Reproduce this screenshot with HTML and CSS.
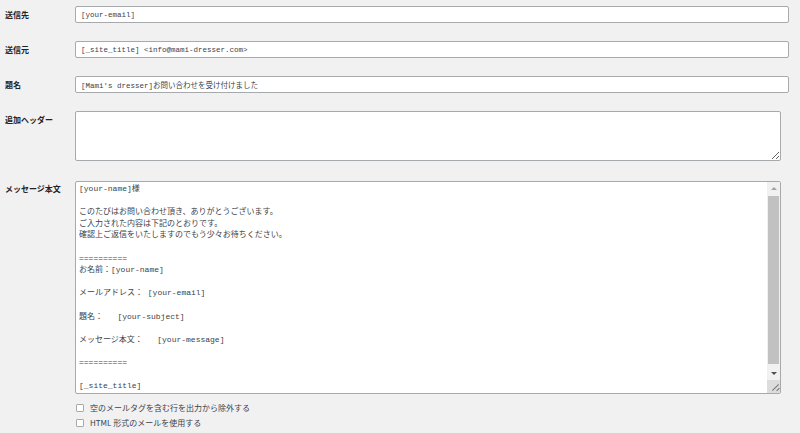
FILE: index.html
```html
<!DOCTYPE html>
<html lang="ja">
<head>
    <meta charset="UTF-8">
    <meta name="viewport" content="width=device-width, initial-scale=1.0">
    <title>メール設定</title>
    <link rel="stylesheet" href="styles.css">
</head>
<body>
    <div class="mail-form">
        <div class="row">
            <label class="row-label">送信先</label>
            <input class="field" type="text" value="[your-email]">
        </div>
        <div class="row">
            <label class="row-label">送信元</label>
            <input class="field" type="text" value="[_site_title] <info@mami-dresser.com>">
        </div>
        <div class="row">
            <label class="row-label">題名</label>
            <input class="field" type="text" value="[Mami's dresser]お問い合わせを受け付けました">
        </div>
        <div class="row row-top">
            <label class="row-label label-header">追加ヘッダー</label>
            <textarea class="area area-header"></textarea>
        </div>
        <div class="row row-top row-body">
            <label class="row-label label-body">メッセージ本文</label>
            <div class="body-cell">
                <div class="area-wrap">
                    <textarea class="area area-body">[your-name]様

このたびはお問い合わせ頂き、ありがとうございます。
ご入力された内容は下記のとおりです。
確認上ご返信をいたしますのでもう少々お待ちください。

==========
お名前：[your-name]

メールアドレス： [your-email]

題名：   [your-subject]

メッセージ本文：   [your-message]

==========

[_site_title]</textarea>
                    <!-- scrollbar drawn over the textarea edge -->
                    <div class="fake-scroll">
                        <div class="scroll-btn up"></div>
                        <div class="scroll-thumb"></div>
                        <div class="scroll-track"></div>
                        <div class="scroll-btn down"></div>
                        <div class="scroll-corner"></div>
                    </div>
                </div>
                <div class="options">
                    <label class="option"><input type="checkbox" class="check"> 空のメールタグを含む行を出力から除外する</label>
                    <label class="option"><input type="checkbox" class="check"> HTML 形式のメールを使用する</label>
                </div>
            </div>
        </div>
    </div>
</body>
</html>
```

FILE: styles.css
```css
* {
    margin: 0;
    padding: 0;
    box-sizing: border-box;
}

body {
    background-color: #f1f1f1;
    color: #1d2327;
    font-family: "Noto Sans CJK JP", "Noto Sans", sans-serif;
    font-size: 8px;
}

.mail-form {
    display: flex;
    flex-direction: column;
    gap: 18px;
    padding-top: 6px;
}

.row {
    display: flex;
    align-items: center;
}

.row-top {
    align-items: flex-start;
}

.row-body {
    margin-top: 2px;
}

.row-label {
    width: 75px;
    flex-shrink: 0;
    padding-left: 5px;
    font-weight: bold;
    line-height: 11px;
}

.label-header {
    padding-top: 3px;
}

.label-body {
    padding-top: 2px;
}

.field,
.area {
    background: #fff;
    border: 1px solid #a7aaad;
    border-radius: 2px;
    color: #3c434a;
    font-family: "Liberation Mono", "Noto Sans CJK JP", monospace;
    outline: none;
}

.field {
    width: 714px;
    height: 17px;
    padding: 0 5px;
    font-size: 7.5px;
}

.area {
    display: block;
    width: 706px;
    padding: 1px 3px;
    font-size: 8px;
    line-height: 11.6px;
}

.area-header {
    height: 50px;
    resize: vertical;
}

.area-wrap {
    position: relative;
    width: 706px;
}

.area-body {
    height: 213px;
    overflow: hidden;
    resize: none;
    white-space: pre;
}

.fake-scroll {
    position: absolute;
    top: 1px;
    right: 1px;
    bottom: 1px;
    width: 13px;
    display: flex;
    flex-direction: column;
    background: #f1f1f1;
}

.scroll-btn {
    height: 14px;
    position: relative;
}

.scroll-btn::after {
    content: '';
    position: absolute;
    left: 4px;
    border-left: 3px solid transparent;
    border-right: 3px solid transparent;
}

.scroll-btn.up::after {
    top: 5px;
    border-bottom: 3px solid #a3a3a3;
}

.scroll-btn.down {
    height: 12px;
}

.scroll-btn.down::after {
    top: 4px;
    border-top: 3px solid #505050;
}

.scroll-thumb {
    height: 168px;
    margin: 0 1px;
    background: #c1c1c1;
}

.scroll-track {
    flex: 1;
}

.scroll-corner {
    height: 13px;
    background: #dcdcdc;
    position: relative;
}

.scroll-corner::before,
.scroll-corner::after {
    content: '';
    position: absolute;
    height: 1px;
    background: #777;
    transform: rotate(-45deg);
}

.scroll-corner::before {
    width: 9px;
    right: 0;
    bottom: 5px;
}

.scroll-corner::after {
    width: 4px;
    right: 0;
    bottom: 3px;
}

.options {
    display: flex;
    flex-direction: column;
    padding-top: 6px;
}

.option {
    display: flex;
    align-items: center;
    gap: 6px;
    height: 15px;
    padding-left: 1px;
    color: #3c434a;
    font-size: 8px;
}

.check {
    appearance: none;
    width: 8px;
    height: 8px;
    background: #fff;
    border: 1px solid #a7aaad;
    border-radius: 1px;
}
```
